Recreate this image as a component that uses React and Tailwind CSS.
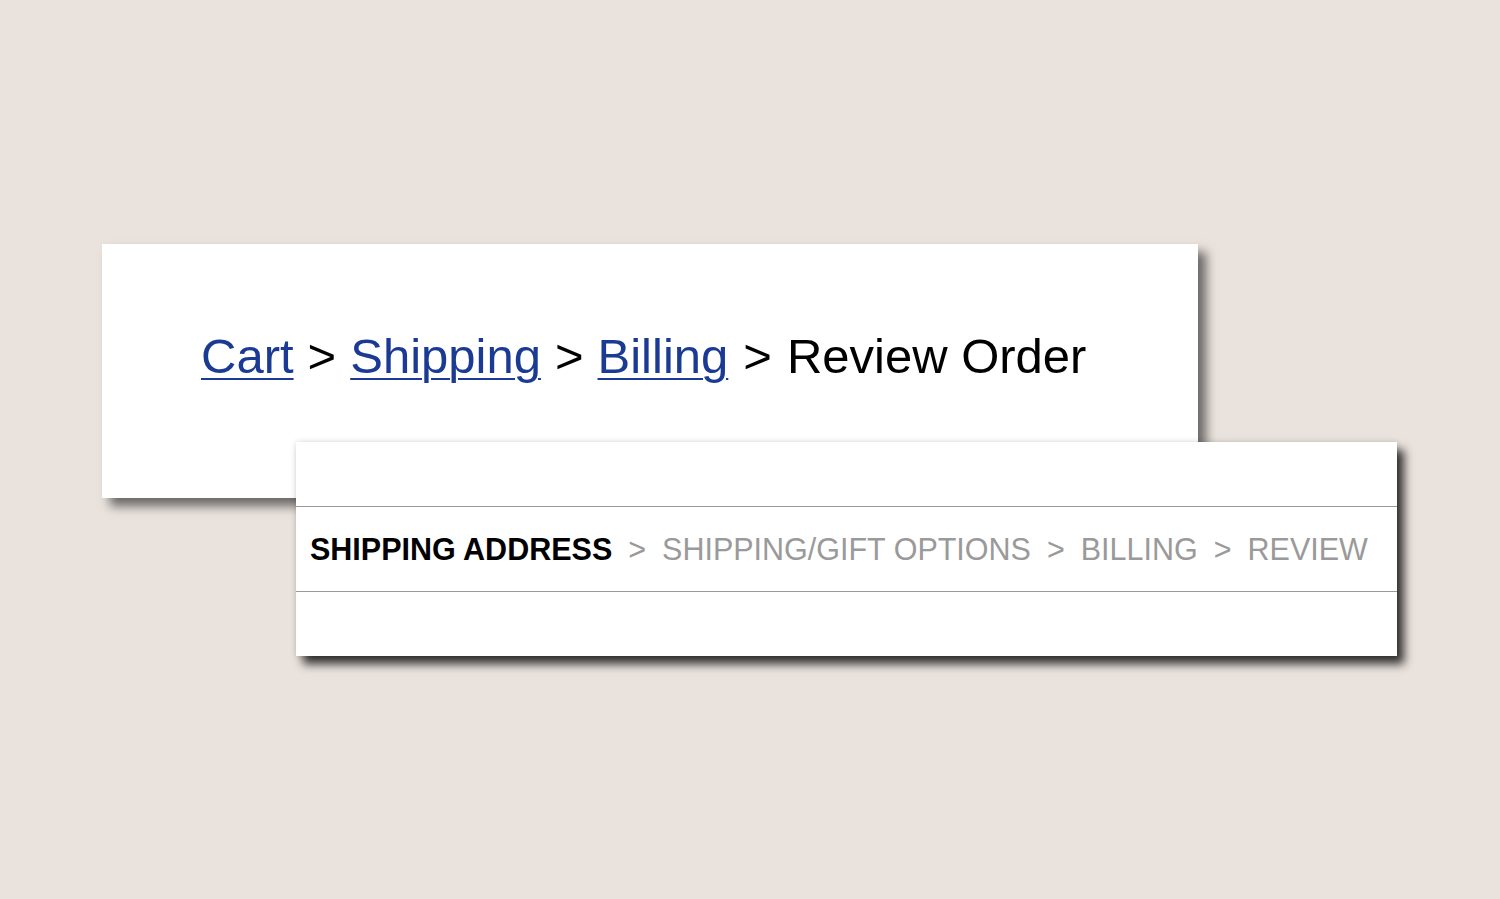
export default function App() {
  const sans = { fontFamily: '"Liberation Sans", Arial, Helvetica, sans-serif' };
  const steps = ["SHIPPING/GIFT OPTIONS", "BILLING", "REVIEW"];
  return (
    <div className="min-h-[899px] w-full bg-[#e9e2dd] pt-[244px]" style={sans}>
      {/* text-link breadcrumb */}
      <div className="ml-[102px] h-[254px] w-[1096px] bg-white pl-[99px] pt-[88px] shadow-[8px_8px_10px_rgba(0,0,0,0.55)]">
        <div className="flex items-baseline whitespace-nowrap text-[49px] leading-none text-black">
          <a href="#" className="text-[#1a3a94] underline decoration-[2px] underline-offset-[5px]">Cart</a>
          <span className="mx-[14px]">&gt;</span>
          <a href="#" className="text-[#1a3a94] underline decoration-[2px] underline-offset-[5px]">Shipping</a>
          <span className="mx-[14px]">&gt;</span>
          <a href="#" className="text-[#1a3a94] underline decoration-[2px] underline-offset-[5px]">Billing</a>
          <span className="mx-[15px]">&gt;</span>
          <span>Review Order</span>
        </div>
      </div>

      {/* step-bar breadcrumb */}
      <div className="relative ml-[296px] mt-[-56px] flex h-[214px] w-[1101px] flex-col bg-white shadow-[7px_8px_9px_rgba(0,0,0,0.78),0_0_6px_rgba(0,0,0,0.14)]">
        <div className="h-[64px]" />
        <div className="flex h-[86px] items-center border-y border-[#9a9a9a] pl-[14px] text-[30.5px] leading-none whitespace-nowrap">
          <span className="font-bold text-black">SHIPPING ADDRESS</span>
          {steps.map((s) => (
            <span key={s} className="flex items-center text-[#9a9a9a]">
              <span className="mx-[16px]">&gt;</span>
              <span>{s}</span>
            </span>
          ))}
        </div>
        <div className="flex-1" />
      </div>
    </div>
  );
}
